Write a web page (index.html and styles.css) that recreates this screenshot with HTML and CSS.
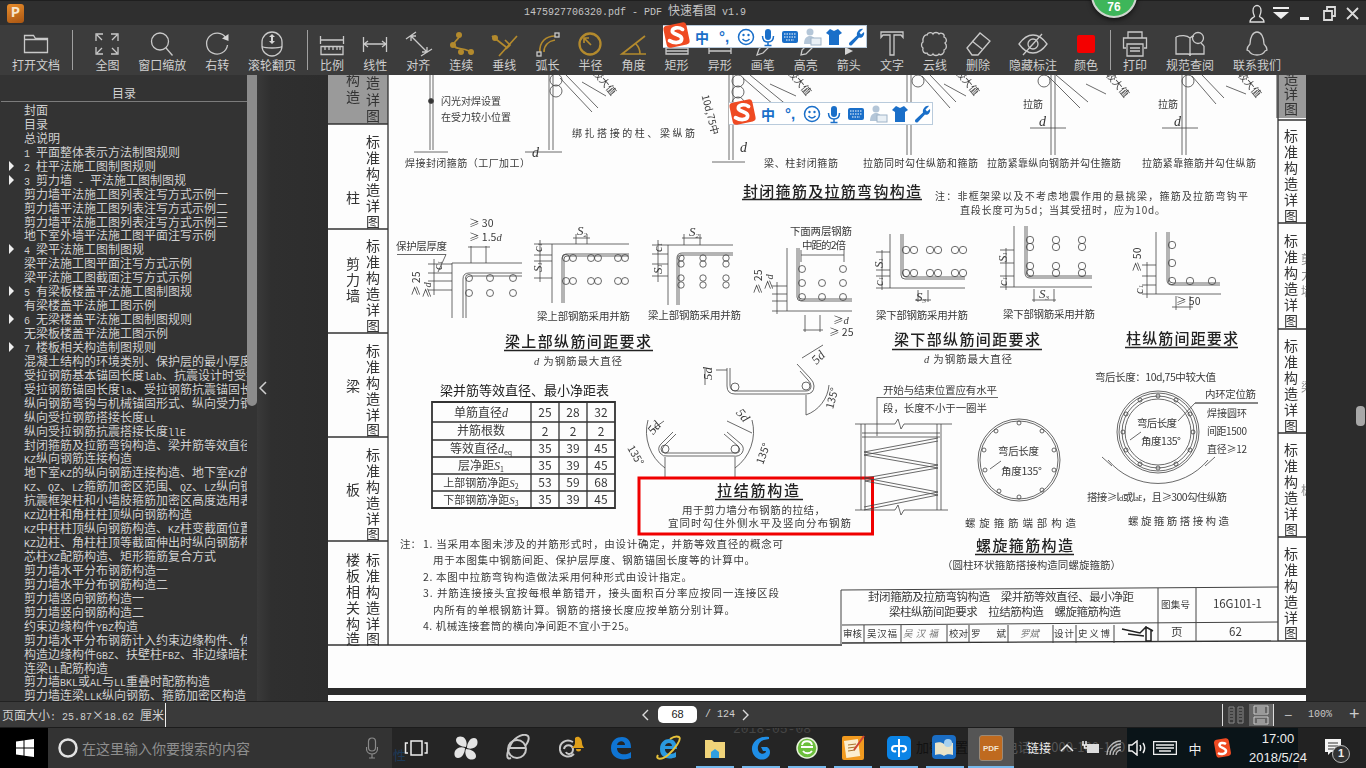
FILE: index.html
```html
<!DOCTYPE html>
<html lang="zh-CN">
<head>
<meta charset="utf-8">
<title>PDF 快速看图</title>
<link rel="stylesheet" href="styles.css">
</head>
<body>
<div class="app">
  <header class="titlebar">
    <div class="logo">P</div>
    <div class="wintitle"><span>1475927706320.pdf - PDF </span><b>快速看图</b><span> v1.9</span></div>
    <div class="winbtns">
      <svg width="20" height="20" viewBox="0 0 20 20" class="wb wu"><path d="M3 19c0-4 3-4 4.500-5.500 0-1-1.500-2.500-1.500-6 0-3 2-5 4-5s4 2 4 5c0 3.500-1.500 5-1.500 6C14 15 17 15 17 19z"/></svg>
      <svg width="24" height="20" viewBox="0 0 24 20" class="wf"><rect x="4" y="4" width="16" height="2"/><path d="M4 9h16l-8 7z"/></svg>
      <svg width="24" height="20" viewBox="0 0 24 20" class="wf"><rect x="7" y="14" width="9" height="3"/></svg>
      <svg width="24" height="20" viewBox="0 0 24 20" class="wb wb2"><path d="M7 8h8v9H7zM10 8V4h8v9h-3"/></svg>
      <svg width="24" height="20" viewBox="0 0 24 20" class="wb wb2"><path d="M6 5l11 11M17 5L6 16"/></svg>
    </div>
  </header>

  <nav class="toolbar">
    <div class="tool t72"><svg viewBox="0 0 36 24"><path class="g" d="M6.500 20.500v-17h9l2 3h12v14zM6.500 7.500h23"/></svg><span>打开文档</span></div>
    <i class="sep"></i>
    <div class="groupb">
      <div class="tool t55"><svg viewBox="0 0 36 24"><path class="g" d="M13 8L8 3M7 9V2h7M23 8l5-5M22 2h7v7M13 16l-5 5M7 15v7h7M23 16l5 5M29 15v7h-7"/></svg><span>全图</span></div>
      <div class="tool t55"><svg viewBox="0 0 36 24"><circle class="g" cx="16" cy="9.500" r="8.500"/><path class="g" d="M22 16l6.500 7.500"/></svg><span>窗口缩放</span></div>
      <div class="tool t55"><svg viewBox="0 0 36 24"><path class="g" d="M27 6A10.500 10.500 0 1 0 28.500 13"/><path class="fg" d="M23 6.500l6.500 2.500L29.500 2z"/></svg><span>右转</span></div>
      <div class="tool t55"><svg viewBox="0 0 36 24"><rect class="g" x="8" y="0" width="20" height="24" rx="10"/><path class="g" d="M8 14.500c4 2 16 2 20 0"/><path class="fg" d="M18 2l3 3h-2v4h2l-3 3-3-3h2V5h-2z"/></svg><span>滚轮翻页</span></div>
    </div>
    <i class="sep sep2"></i>
    <div class="groupc">
      <div class="tool t43"><svg viewBox="0 0 36 24"><path class="g" d="M6.500 4v8M29.500 4v8M7 8h22"/><path class="g" d="M7 14.500h22v8H7zM11 15v3M15 15v3M19 15v3M23 15v3M26 15v3"/></svg><span>比例</span></div>
      <div class="tool t43"><svg viewBox="0 0 36 24"><path class="g" d="M6.500 5v15M29.500 5v15M7 12h22M11 9l-4 3 4 3M25 9l4 3-4 3"/></svg><span>线性</span></div>
      <div class="tool t43"><svg viewBox="0 0 36 24"><path class="g" d="M6 7l10-7M21 24l11-7M11 4l16 16M11 9V4h5M22 20h5v-5"/></svg><span>对齐</span></div>
      <div class="tool t43"><svg viewBox="0 0 36 24"><path class="o" d="M16 2c3 4-6 7-5 11 1 5 7 2 15 6"/><circle class="of" cx="16" cy="3" r="3"/><circle class="of" cx="10" cy="13" r="3"/><circle class="of" cx="18" cy="20" r="3"/><circle class="of" cx="28" cy="20" r="3"/></svg><span>连续</span></div>
      <div class="tool t43"><svg viewBox="0 0 36 24"><path class="o" d="M13 24L31 4M6 4l14 11M19 8l5 5-4 4"/><circle class="of" cx="9" cy="6" r="3"/></svg><span>垂线</span></div>
      <div class="tool t43"><svg viewBox="0 0 36 24"><path class="o" d="M11 20C10 10 17 4 26 4M15 20c0-7 5-11 11-12"/><rect class="g" x="8" y="20" width="4" height="4"/><rect class="g" x="26" y="1" width="4" height="4"/></svg><span>弧长</span></div>
      <div class="tool t43"><svg viewBox="0 0 36 24"><circle class="o o2" cx="18" cy="12" r="10.500"/><path class="o" d="M19 13L12 6M12 11V6h5"/></svg><span>半径</span></div>
      <div class="tool t43"><svg viewBox="0 0 36 24"><path class="o" d="M29 4L6 22h24M20 12c3 3 4 6 4 10"/></svg><span>角度</span></div>
      <div class="tool t43"><svg viewBox="0 0 36 24"><path class="g" d="M7 16h22v6H7zM7 19h22"/></svg><span>矩形</span></div>
      <div class="tool t43"><svg viewBox="0 0 36 24"><path class="g" d="M7 16v6M29 16v6M7 19h22"/></svg><span>异形</span></div>
      <div class="tool t43"><svg viewBox="0 0 36 24"><path class="g" d="M12 23l2-6 8-8 4 4-8 8z"/></svg><span>画笔</span></div>
      <div class="tool t43"><svg viewBox="0 0 36 24"><path class="g" d="M13 23l1-5 8-8 4 4-8 8z"/></svg><span>高亮</span></div>
      <div class="tool t43"><svg viewBox="0 0 36 24"><path class="fg" d="M14 15l8 4-8 4z"/></svg><span>箭头</span></div>
      <div class="tool t43"><svg viewBox="0 0 36 24"><path class="g" d="M7 0h22v5.500l-2-2.500h-7v20h-4V3H9L7 5.500z"/></svg><span>文字</span></div>
      <div class="tool t43"><svg viewBox="0 0 36 24"><path class="g" d="M10 3c1-3 5-3 6-1 1-2 5-2 6 0 2-2 6 0 5 3 3 1 3 5 1 6 2 2 2 6-1 7 1 3-3 6-5 4-1 2-5 2-6 0-1 2-5 2-6-1-3 1-5-2-4-5-2-1-2-5 0-6-1-4 2-8 4-7z"/></svg><span>云线</span></div>
      <div class="tool t43"><svg viewBox="0 0 36 24"><path class="g" d="M7 16L20 1l10 8-12 14h-6zM12 9l10 8"/></svg><span>删除</span></div>
    </div>
    <div class="tool t56"><svg viewBox="0 0 36 24"><path class="g" d="M4 12c5-7 9-9 14-9s9 2 14 9c-5 7-9 9-14 9S9 19 4 12z"/><circle class="g" cx="18" cy="12" r="5"/><path class="g" d="M27 2L8 23"/></svg><span>隐藏标注</span></div>
    <div class="tool t43b"><svg viewBox="0 0 36 24"><rect class="red" x="9" y="3" width="18" height="18" rx="2"/></svg><span>颜色</span></div>
    <i class="sep sep3"></i>
    <div class="tool t43c"><svg viewBox="0 0 36 24"><path class="g" d="M11 6V0h14v6M9 16H6.500V6h23v10H27M10 12h16v12H10zM13 16h10M13 19h10"/></svg><span>打印</span></div>
    <div class="tool t60"><svg viewBox="0 0 36 24"><path class="g" d="M4 5v17h12c1 0 2 1 2 2 0-1 1-2 2-2h12V14M4 5c5-2 11-2 14 1v18M18 6c1-1 2-2 4-2"/><circle class="g" cx="26" cy="6" r="5.500"/><path class="g" d="M29 11l3 3"/></svg><span>规范查阅</span></div>
    <div class="tool t60b"><svg viewBox="0 0 36 24"><path class="g" d="M11 12c0-7 3-12 7-12s7 5 7 12c2 2 3 4 3 6l-2 1c-1 2-3 4-8 4s-7-2-8-4l-2-1c0-2 1-4 3-6z"/></svg><span>联系我们</span></div>
  </nav>

  <main class="main">
    <aside class="side">
      <div class="sidehead">目录</div>
      <ul class="toc">
        <li>封面</li>
        <li>目录</li>
        <li>总说明</li>
        <li><span class="l">1 </span>平面整体表示方法制图规则</li>
        <li class="arr"><span class="l">2 </span>柱平法施工图制图规则</li>
        <li class="arr"><span class="l">3 </span>剪力墙<span class="l"> - </span>平法施工图制图规</li>
        <li>剪力墙平法施工图列表注写方式示例一</li>
        <li>剪力墙平法施工图列表注写方式示例二</li>
        <li>剪力墙平法施工图列表注写方式示例三</li>
        <li>地下室外墙平法施工图平面注写示例</li>
        <li class="arr"><span class="l">4 </span>梁平法施工图制图规</li>
        <li>梁平法施工图平面注写方式示例</li>
        <li>梁平法施工图截面注写方式示例</li>
        <li class="arr"><span class="l">5 </span>有梁板楼盖平法施工图制图规</li>
        <li>有梁楼盖平法施工图示例</li>
        <li class="arr"><span class="l">6 </span>无梁楼盖平法施工图制图规则</li>
        <li>无梁板楼盖平法施工图示例</li>
        <li class="arr"><span class="l">7 </span>楼板相关构造制图规则</li>
        <li>混凝土结构的环境类别、保护层的最小厚度</li>
        <li>受拉钢筋基本锚固长度<span class="l">lab</span>、抗震设计时受拉钢筋基本锚固长度</li>
        <li class="cur"><span>受拉钢筋锚固长度<span class="l">la</span>、受拉钢筋抗震锚固长度</span></li>
        <li>纵向钢筋弯钩与机械锚固形式、纵向受力钢筋</li>
        <li>纵向受拉钢筋搭接长度<span class="l">LL</span></li>
        <li>纵向受拉钢筋抗震搭接长度<span class="l">llE</span></li>
        <li>封闭箍筋及拉筋弯钩构造、梁并筋等效直径</li>
        <li><span class="l">KZ</span>纵向钢筋连接构造</li>
        <li>地下室<span class="l">KZ</span>的纵向钢筋连接构造、地下室<span class="l">KZ</span>的</li>
        <li><span class="l">KZ</span>、<span class="l">QZ</span>、<span class="l">LZ</span>箍筋加密区范围、<span class="l">QZ</span>、<span class="l">LZ</span>纵向钢筋</li>
        <li>抗震框架柱和小墙肢箍筋加密区高度选用表</li>
        <li><span class="l">KZ</span>边柱和角柱柱顶纵向钢筋构造</li>
        <li><span class="l">KZ</span>中柱柱顶纵向钢筋构造、<span class="l">KZ</span>柱变截面位置</li>
        <li><span class="l">KZ</span>边柱、角柱柱顶等截面伸出时纵向钢筋构造</li>
        <li>芯柱<span class="l">XZ</span>配筋构造、矩形箍筋复合方式</li>
        <li>剪力墙水平分布钢筋构造一</li>
        <li>剪力墙水平分布钢筋构造二</li>
        <li>剪力墙竖向钢筋构造一</li>
        <li>剪力墙竖向钢筋构造二</li>
        <li>约束边缘构件<span class="l">YBZ</span>构造</li>
        <li>剪力墙水平分布钢筋计入约束边缘构件、体积</li>
        <li>构造边缘构件<span class="l">GBZ</span>、扶壁柱<span class="l">FBZ</span>、非边缘暗柱</li>
        <li>连梁<span class="l">LL</span>配筋构造</li>
        <li>剪力墙<span class="l">BKL</span>或<span class="l">AL</span>与<span class="l">LL</span>重叠时配筋构造</li>
        <li>剪力墙连梁<span class="l">LLK</span>纵向钢筋、箍筋加密区构造</li>
      </ul>
    </aside>
    <div class="sidebar-track"><div class="thumb"></div></div>
    <div class="gutter"><svg class="collapse" width="10" height="14" viewBox="0 0 10 14"><path d="M8 1L2 7l6 6"/></svg></div>

    <svg class="page" viewBox="328 75 978 626" width="978" height="626">
      <rect x="328" y="75" width="978" height="613" fill="#fdfdfd"/>
      <rect x="328" y="688" width="978" height="7" fill="#2b2b2b"/>
      <rect x="328" y="695" width="978" height="6" fill="#fdfdfd"/>

      <!-- side index tabs -->
      <rect x="328" y="75" width="60" height="49" fill="#9a9a9a"/>
      <rect x="1276" y="75" width="30" height="43" fill="#9a9a9a"/>
      <g class="ln2">
        <path d="M388 75V645M328 124H388M328 229H388M328 333H388M328 437H388M328 541H388M328 645H842"/>
        <path d="M1278 75V641M1278 120H1306M1278 223H1306M1278 329H1306M1278 433H1306M1278 537H1306M1278 641H1306M842 643L1278 641"/>
      </g>
      <g class="tab">
        <text x="346" y="85">构</text><text x="346" y="102">造</text>
        <text x="366" y="88">造</text><text x="366" y="105">详</text><text x="366" y="121">图</text>
        <text x="346" y="203">柱</text>
        <text x="346" y="269">剪</text><text x="346" y="285">力</text><text x="346" y="301">墙</text>
        <text x="346" y="391">梁</text>
        <text x="346" y="495">板</text>
        <text x="346" y="565">楼</text><text x="346" y="581">板</text><text x="346" y="597">相</text><text x="346" y="613">关</text><text x="346" y="629">构</text><text x="346" y="644">造</text>
        <text x="366" y="147">标</text><text x="366" y="163">准</text><text x="366" y="179">构</text><text x="366" y="195">造</text><text x="366" y="211">详</text><text x="366" y="227">图</text>
        <text x="366" y="251">标</text><text x="366" y="267">准</text><text x="366" y="283">构</text><text x="366" y="299">造</text><text x="366" y="315">详</text><text x="366" y="331">图</text>
        <text x="366" y="356">标</text><text x="366" y="372">准</text><text x="366" y="388">构</text><text x="366" y="404">造</text><text x="366" y="420">详</text><text x="366" y="435">图</text>
        <text x="366" y="460">标</text><text x="366" y="476">准</text><text x="366" y="492">构</text><text x="366" y="508">造</text><text x="366" y="524">详</text><text x="366" y="539">图</text>
        <text x="366" y="565">标</text><text x="366" y="581">准</text><text x="366" y="597">构</text><text x="366" y="613">造</text><text x="366" y="629">详</text><text x="366" y="644">图</text>
        <text x="1284" y="84">造</text><text x="1284" y="99">详</text><text x="1284" y="114">图</text>
        <text x="1284" y="141">标</text><text x="1284" y="157">准</text><text x="1284" y="173">构</text><text x="1284" y="189">造</text><text x="1284" y="205">详</text><text x="1284" y="221">图</text>
        <text x="1284" y="246">标</text><text x="1284" y="262">准</text><text x="1284" y="278">构</text><text x="1284" y="294">造</text><text x="1284" y="310">详</text><text x="1284" y="326">图</text>
        <text x="1284" y="351">标</text><text x="1284" y="367">准</text><text x="1284" y="383">构</text><text x="1284" y="399">造</text><text x="1284" y="415">详</text><text x="1284" y="431">图</text>
        <text x="1284" y="455">标</text><text x="1284" y="471">准</text><text x="1284" y="487">构</text><text x="1284" y="503">造</text><text x="1284" y="519">详</text><text x="1284" y="535">图</text>
        <text x="1284" y="559">标</text><text x="1284" y="575">准</text><text x="1284" y="591">构</text><text x="1284" y="607">造</text><text x="1284" y="623">详</text><text x="1284" y="638">图</text>
      </g>
      <g class="bleed"><text x="1301" y="264">剪</text><text x="1301" y="280">力</text><text x="1301" y="296">墙</text><text x="1301" y="392">梁</text><text x="1301" y="495">板</text></g>

      <!-- top hook row -->
      <g class="ln">
        <path d="M430 75V150M433 75V150M414 152H448"/><circle class="dot" cx="431" cy="101" r="2.500"/>
        <path d="M549 75V150M553 75V150M525 152H562"/>
        <circle cx="556" cy="80" r="6"/><circle cx="556" cy="91" r="6"/>
        <path d="M560 78L592 112M566 75L598 108M582 82L606 96"/>
        <path d="M729 75V160M733 75V160M712 162H745"/>
        <circle cx="738" cy="81" r="6"/><circle cx="738" cy="92" r="6"/><circle cx="738" cy="103" r="6"/>
        <path d="M743 78L782 112M750 75L788 106M770 84L796 96"/>
        <path d="M907 75V155M911 75V155M889 120H925"/>
        <circle cx="918" cy="81" r="6"/><path d="M922 76L950 108M930 75L956 102M944 84L966 96"/>
        <path d="M1051 75V155M1055 75V155M1030 128H1066"/>
        <circle cx="1044" cy="81" r="6"/><path d="M1048 76L1080 108M1056 75L1088 102M1086 84L1106 94"/>
        <path d="M1182 75V155M1186 75V155M1162 128H1198"/>
        <circle cx="1188" cy="81" r="6"/><path d="M1192 76L1216 104M1202 75L1224 98M1226 86L1246 94"/>
      </g>
      <g class="sm">
        <text x="441" y="105">闪光对焊设置</text><text x="441" y="121">在受力较小位置</text>
        <text x="405" y="167" textLength="125">焊接封闭箍筋（工厂加工）</text>
        <text x="572" y="137" textLength="123">绑扎搭接的柱、梁纵筋</text>
        <text x="764" y="167" textLength="74">梁、柱封闭箍筋</text>
        <text x="1023" y="108">拉筋</text><text x="1158" y="108">拉筋</text>
        <text x="863" y="167" textLength="115">拉筋同时勾住纵筋和箍筋</text>
        <text x="987" y="167" textLength="134">拉筋紧靠纵向钢筋并勾住箍筋</text>
        <text x="1142" y="167" textLength="114">拉筋紧靠箍筋并勾住纵筋</text>
        <text x="935" y="200" textLength="313">注：非框架梁以及不考虑地震作用的悬挑梁，箍筋及拉筋弯钩平</text>
        <text x="960" y="214" textLength="205">直段长度可为5d；当其受扭时，应为10d。</text>
        <text class="rot" transform="rotate(50 605 82)" x="590" y="86">较大值</text>
        <text class="rot" transform="rotate(50 800 82)" x="785" y="86">较大值</text>
        <text class="rot" transform="rotate(50 968 82)" x="953" y="86">较大值</text>
        <text class="rot" transform="rotate(50 1118 84)" x="1103" y="88">较大值</text>
        <text class="rot" transform="rotate(50 1250 84)" x="1235" y="88">较大值</text>
        <text transform="rotate(75 710 112)" x="692" y="116">10d,75中</text>
      </g>
      <g class="it"><text x="532" y="157">d</text><text x="740" y="152">d</text><text x="1039" y="126">d</text><text x="1174" y="126">d</text></g>

      <text class="hd" x="743" y="197" textLength="178">封闭箍筋及拉筋弯钩构造</text>
      <path class="ul" d="M742 199.500H922"/>

      <!-- mid diagrams -->
      <g class="ln">
        <path d="M452 263V318M452 263H522M463 318V279Q463 273 469 273H522M466 318V281Q466 276 471 276H522"/>
        <circle cx="469" cy="278" r="3.500"/><circle cx="490" cy="278" r="3.500"/><circle cx="513" cy="278" r="3.500"/>
        <circle cx="469" cy="293" r="3.500"/><circle cx="490" cy="293" r="3.500"/><circle cx="513" cy="293" r="3.500"/>
        <path d="M471 246V263M486 246V263M468 247H490M397 254.500H446L438 272M428 264H452M428 273H452M428 281H452M428 290H452M434 259V295"/>
        <path d="M552 244V303M552 244H629M562 303V258Q562 254 566 254H629M564 303V259Q564 256 567 256H629"/>
        <circle cx="566" cy="258" r="3.500"/><circle cx="573" cy="258" r="3.500"/><circle cx="591" cy="258" r="3.500"/><circle cx="598" cy="258" r="3.500"/><circle cx="618" cy="258" r="3.500"/><circle cx="625" cy="258" r="3.500"/>
        <circle cx="566" cy="281" r="3.500"/><circle cx="573" cy="281" r="3.500"/><circle cx="591" cy="281" r="3.500"/><circle cx="598" cy="281" r="3.500"/><circle cx="618" cy="281" r="3.500"/><circle cx="625" cy="281" r="3.500"/>
        <path d="M576 234V244M587 234V244M573 238H590M534 244H552M534 255H552M534 261H552M534 278H552M540 240V282"/>
        <path d="M668 245V305M668 245H733M677 305V258Q677 253 682 253H733M679 305V259Q679 255 683 255H733"/>
        <circle cx="681" cy="258" r="3.200"/><circle cx="681" cy="264" r="3.200"/><circle cx="703" cy="258" r="3.200"/><circle cx="703" cy="264" r="3.200"/><circle cx="726" cy="258" r="3.200"/><circle cx="726" cy="264" r="3.200"/>
        <circle cx="681" cy="278" r="3.200"/><circle cx="681" cy="285" r="3.200"/><circle cx="703" cy="278" r="3.200"/><circle cx="703" cy="285" r="3.200"/><circle cx="726" cy="278" r="3.200"/><circle cx="726" cy="285" r="3.200"/>
        <path d="M684 234V245M700 234V245M682 238H702M652 245H668M652 254H668M652 264H668M652 276H668M658 240V282"/>
        <path d="M787 248V311M787 311H852M797 248V297Q797 301 801 301H852M799 248V296Q799 299 802 299H852"/>
        <circle cx="802" cy="269" r="3.500"/><circle cx="802" cy="283" r="3.500"/><circle cx="802" cy="297" r="3.500"/><circle cx="822" cy="283" r="3.500"/><circle cx="822" cy="297" r="3.500"/><circle cx="843" cy="269" r="3.500"/><circle cx="843" cy="283" r="3.500"/><circle cx="843" cy="297" r="3.500"/>
        <path d="M801 255H844M801 250V262M844 250V262M805 315V332M820 315V332M803 330H823M772 286H787M772 294H787M772 301H787M772 311H787M777 282V314"/>
        <path d="M890 234V288M890 288H965M901 234V275Q901 279 905 279H965M903 234V273Q903 277 906 277H965"/>
        <circle cx="906" cy="250" r="3.700"/><circle cx="914" cy="250" r="3.700"/><circle cx="930" cy="250" r="3.700"/><circle cx="938" cy="250" r="3.700"/><circle cx="955" cy="250" r="3.700"/><circle cx="963" cy="250" r="3.700"/>
        <circle cx="906" cy="273" r="3.700"/><circle cx="914" cy="273" r="3.700"/><circle cx="930" cy="273" r="3.700"/><circle cx="938" cy="273" r="3.700"/><circle cx="955" cy="273" r="3.700"/><circle cx="963" cy="273" r="3.700"/>
        <path d="M918 290V302M928 290V302M915 300H931M876 252H890M876 270H890M876 276H890M876 288H890M882 250V290"/>
        <path d="M1014 226V287M1014 287H1092M1025 226V273Q1025 278 1030 278H1092M1027 226V272Q1027 276 1031 276H1092"/>
        <circle cx="1030" cy="240" r="3.700"/><circle cx="1030" cy="247" r="3.700"/><circle cx="1056" cy="240" r="3.700"/><circle cx="1056" cy="247" r="3.700"/><circle cx="1082" cy="240" r="3.700"/><circle cx="1082" cy="247" r="3.700"/>
        <circle cx="1030" cy="266" r="3.700"/><circle cx="1030" cy="273" r="3.700"/><circle cx="1056" cy="266" r="3.700"/><circle cx="1056" cy="273" r="3.700"/><circle cx="1082" cy="266" r="3.700"/><circle cx="1082" cy="273" r="3.700"/>
        <path d="M1034 289V302M1054 289V302M1032 300H1056M1000 250H1014M1000 263H1014M1000 276H1014M1000 287H1014M1006 248V290"/>
        <path d="M1156 232V294M1156 294H1221M1167 232V280Q1167 285 1172 285H1220M1169 232V279Q1169 283 1173 283H1220"/>
        <circle cx="1172" cy="245" r="3.700"/><circle cx="1172" cy="263" r="3.700"/><circle cx="1172" cy="281" r="3.700"/><circle cx="1190" cy="281" r="3.700"/><circle cx="1212" cy="281" r="3.700"/>
        <path d="M1176 296V310M1190 296V310M1172 307H1193M1142 265H1156M1142 276H1156M1142 285H1156M1142 294H1156M1147 262V298"/>
      </g>
      <g class="sm2">
        <text x="469" y="227">≥ 30</text><text x="469" y="241">≥ 1.5<tspan class="ital">d</tspan></text>
        <text x="396" y="250" textLength="51">保护层厚度</text>
        <text x="790" y="235" textLength="62">下面两层钢筋</text><text x="802" y="249" textLength="44">中距的2倍</text>
        <text x="537" y="320" textLength="93">梁上部钢筋采用并筋</text>
        <text x="648" y="319" textLength="93">梁上部钢筋采用并筋</text>
        <text x="876" y="319" textLength="92">梁下部钢筋采用并筋</text>
        <text x="1003" y="318" textLength="92">梁下部钢筋采用并筋</text>
        <text x="833" y="324">≥<tspan class="ital">d</tspan></text><text x="829" y="336">≥ 25</text>
        <text x="1176" y="305">≥ 50</text>
        <text class="it2" x="577" y="235">S<tspan class="sub" dy="2">2</tspan></text>
        <text class="it2" x="689" y="236">S<tspan class="sub" dy="2">2</tspan></text>
        <text class="it2" x="916" y="301">S<tspan class="sub" dy="2">3</tspan></text>
        <text class="it2" x="1039" y="298">S<tspan class="sub" dy="2">3</tspan></text>
        <text transform="rotate(-90 420 296)" x="420" y="296">≥ 25</text>
        <text transform="rotate(-90 431 298)" x="431" y="298">≥<tspan class="ital">d</tspan></text>
        <text transform="rotate(-90 762 294)" x="762" y="294">≥ 25</text>
        <text transform="rotate(-90 773 290)" x="773" y="290">≥<tspan class="ital">d</tspan></text>
        <text transform="rotate(-90 1141 272)" x="1141" y="272">≥ 50</text>
        <text class="it2" transform="rotate(-90 442 270)" x="442" y="270">c<tspan class="sub">1</tspan></text>
        <text class="it2" transform="rotate(-90 542 272)" x="542" y="272">S<tspan class="sub">1</tspan></text>
        <text class="it2" transform="rotate(-90 542 252)" x="542" y="252">c<tspan class="sub">1</tspan></text>
        <text class="it2" transform="rotate(-90 662 274)" x="662" y="274">S<tspan class="sub">1</tspan></text>
        <text class="it2" transform="rotate(-90 662 252)" x="662" y="252">c<tspan class="sub">1</tspan></text>
        <text class="it2" transform="rotate(-90 883 268)" x="883" y="268">S<tspan class="sub">1</tspan></text>
        <text class="it2" transform="rotate(-90 883 286)" x="883" y="286">c<tspan class="sub">1</tspan></text>
        <text class="it2" transform="rotate(-90 1007 262)" x="1007" y="262">S<tspan class="sub">1</tspan></text>
        <text class="it2" transform="rotate(-90 1007 286)" x="1007" y="286">c<tspan class="sub">1</tspan></text>
        <text class="it2" transform="rotate(-90 1143 294)" x="1143" y="294">c<tspan class="sub">1</tspan></text>
      </g>

      <text class="hd" x="505" y="347" textLength="146">梁上部纵筋间距要求</text><path class="ul" d="M504 350.500H653"/>
      <text class="hd" x="894" y="345" textLength="146">梁下部纵筋间距要求</text><path class="ul" d="M892 349.500H1042"/>
      <text class="hd" x="1126" y="344" textLength="112">柱纵筋间距要求</text><path class="ul" d="M1125 347.500H1238"/>
      <g class="sm2">
        <text x="534" y="365" textLength="88"><tspan class="ital">d</tspan> 为钢筋最大直径</text>
        <text x="924" y="363" textLength="88"><tspan class="ital">d</tspan> 为钢筋最大直径</text>
      </g>

      <!-- table -->
      <text class="tt" x="440" y="395" textLength="169">梁并筋等效直径、最小净距表</text>
      <g class="ln2"><path class="th" d="M432 402H615V508H432z"/><path d="M531 402V508M559 402V508M587 402V508M432 422H615M432 440H615M432 457H615M432 474H615M432 491H615"/></g>
      <g class="cell">
        <text x="481" y="417">单筋直径<tspan class="ital">d</tspan></text><text x="481" y="435">并筋根数</text><text x="481" y="453">等效直径<tspan class="ital">d</tspan><tspan class="sub" dy="2">eq</tspan></text><text x="481" y="470">层净距<tspan class="ital">S</tspan><tspan class="sub" dy="2">1</tspan></text><text x="481" y="487" class="c11">上部钢筋净距<tspan class="ital">S</tspan><tspan class="sub" dy="2">2</tspan></text><text x="481" y="504" class="c11">下部钢筋净距<tspan class="ital">S</tspan><tspan class="sub" dy="2">3</tspan></text>
        <text x="545" y="417">25</text><text x="573" y="417">28</text><text x="601" y="417">32</text>
        <text x="545" y="436">2</text><text x="573" y="436">2</text><text x="601" y="436">2</text>
        <text x="545" y="453">35</text><text x="573" y="453">39</text><text x="601" y="453">45</text>
        <text x="545" y="470">35</text><text x="573" y="470">39</text><text x="601" y="470">45</text>
        <text x="545" y="487">53</text><text x="573" y="487">59</text><text x="601" y="487">68</text>
        <text x="545" y="504">35</text><text x="573" y="504">39</text><text x="601" y="504">45</text>
      </g>

      <!-- tie bars -->
      <g class="ln">
        <path d="M727 368V386Q727 394 735 394H806Q814 394 814 386 814 382 810 378L797 364M730 368V385Q730 391 736 391H806Q811 391 811 386 811 383 808 380L800 371M716 370H727M705 368V385"/>
        <circle cx="735" cy="387" r="4"/><circle cx="806" cy="386" r="4"/>
        <path d="M806 395V415M806 415A35 35 0 0 0 829 385M802 358L823 345"/>
        <path d="M673 432L661 444Q657 448 660 453 663 457 668 456H733Q739 457 742 453 745 448 741 444L727 432M676 434L664 446Q661 449 663 452 665 454 668 453H733Q737 454 739 452 741 449 738 446L724 434"/>
        <circle cx="665" cy="449" r="4"/><circle cx="735" cy="449" r="4"/>
        <path d="M665 457V477M735 457V477M665 468A45 45 0 0 1 648 420M735 468A45 45 0 0 0 752 420M650 431L664 421M727 421L752 433"/>
      </g>
      <g class="sm2">
        <text class="it2" transform="rotate(-90 712 380)" x="712" y="380">5d</text>
        <text class="it2" transform="rotate(-50 658 425)" x="647" y="428">5d</text>
        <text class="it2" transform="rotate(50 745 418)" x="735" y="422">5d</text>
        <text class="it2" transform="rotate(-45 818 358)" x="812" y="362">5d</text>
        <text transform="rotate(-75 832 402)" x="825" y="405">135°</text>
        <text transform="rotate(60 634 452)" x="627" y="456">135°</text>
        <text transform="rotate(-70 762 456)" x="754" y="460">135°</text>
      </g>
      <text class="hd" x="717" y="496" textLength="82">拉结筋构造</text><path class="ul" d="M715 499.500H803"/>
      <g class="sm2"><text x="682" y="514" textLength="143">用于剪力墙分布钢筋的拉结，</text><text x="668" y="527" textLength="183">宜同时勾住外侧水平及竖向分布钢筋</text></g>
      <rect class="redbox" x="639" y="478" width="233.500" height="56"/>

      <!-- spiral -->
      <g class="ln">
        <path d="M877 397.500H998M877 397V436M855 424H895L898 419 901 429 904 424H952M855 510H895L898 505 901 515 904 510H948"/>
        <path d="M861 424V510M865 424V510M937 424V510M941 424V510"/>
        <path d="M862 433H940M862 437H940M864 452L938 438M864 455L938 441M864 452L938 465M864 455L938 468M938 465L865 478M938 468L865 481M865 478L938 492M865 481L938 495M938 492L864 507M938 495L864 510"/>
        <circle cx="1019" cy="460" r="41"/><circle cx="1019" cy="460" r="39"/>
        <circle cx="1158" cy="432" r="41"/><circle cx="1158" cy="432" r="39"/><circle cx="1158" cy="432" r="36"/><circle cx="1158" cy="432" r="33"/>
        <circle cx="1158" cy="396" r="2"/><circle cx="1176" cy="400" r="2"/><circle cx="1190" cy="414" r="2"/><circle cx="1193" cy="432" r="2"/><circle cx="1190" cy="450" r="2"/><circle cx="1176" cy="464" r="2"/><circle cx="1158" cy="468" r="2"/><circle cx="1140" cy="464" r="2"/><circle cx="1126" cy="450" r="2"/><circle cx="1123" cy="432" r="2"/><circle cx="1126" cy="414" r="2"/><circle cx="1140" cy="400" r="2"/>
        <circle cx="1019" cy="423" r="2"/><circle cx="1042" cy="431" r="2"/><circle cx="1054" cy="450" r="2"/><circle cx="1054" cy="470" r="2"/><circle cx="1042" cy="490" r="2"/><circle cx="1019" cy="497" r="2"/><circle cx="999" cy="491" r="2"/><circle cx="985" cy="470" r="2"/><circle cx="984" cy="450" r="2"/><circle cx="996" cy="431" r="2"/>
        <path d="M1195 403H1258L1195 403L1178 421M1108 460A65 65 0 0 0 1208 460M1102 457L1112 466M1215 457L1205 466M990 469L1001 461M1130 440L1141 432"/>
      </g>
      <g class="sm2">
        <text x="883" y="394" textLength="114">开始与结束位置应有水平</text>
        <text x="883" y="412" textLength="104">段，长度不小于一圈半</text>
        <text x="998" y="455" textLength="41">弯后长度</text><text x="1001" y="475" textLength="41">角度135°</text>
        <text x="1137" y="427" textLength="40">弯后长度</text><text x="1141" y="445" textLength="40">角度135°</text>
        <text x="1095" y="381" textLength="121">弯后长度：10d,75中较大值</text>
        <text x="1205" y="398" textLength="51">内环定位筋</text>
        <text class="s10" x="1207" y="417" textLength="40">焊接圆环</text><text class="s10" x="1207" y="435" textLength="40">间距1500</text><text class="s10" x="1207" y="453" textLength="40">直径≥12</text>
        <text x="1087" y="501" textLength="140">搭接≥l<tspan class="sub">d</tspan>或l<tspan class="sub">aE</tspan>，且≥300勾住纵筋</text>
        <text x="965" y="527" textLength="111">螺旋箍筋端部构造</text>
        <text x="1128" y="525" textLength="101">螺旋箍筋搭接构造</text>
        <text x="942" y="569" textLength="179">（圆柱环状箍筋搭接构造同螺旋箍筋）</text>
      </g>
      <text class="hd" x="976" y="551" textLength="97">螺旋箍筋构造</text><path class="ul" d="M975 554.500H1074"/>

      <!-- notes -->
      <g class="note">
        <text x="400" y="548">注：</text>
        <text x="423" y="548" textLength="360">1. 当采用本图未涉及的并筋形式时，由设计确定，并筋等效直径的概念可</text>
        <text x="433" y="564" textLength="322">用于本图集中钢筋间距、保护层厚度、钢筋锚固长度等的计算中。</text>
        <text x="423" y="581" textLength="269">2. 本图中拉筋弯钩构造做法采用何种形式由设计指定。</text>
        <text x="423" y="597" textLength="356">3. 并筋连接接头宜按每根单筋错开，接头面积百分率应按同一连接区段</text>
        <text x="433" y="614" textLength="302">内所有的单根钢筋计算。钢筋的搭接长度应按单筋分别计算。</text>
        <text x="423" y="630" textLength="212">4. 机械连接套筒的横向净间距不宜小于25。</text>
      </g>

      <!-- title block -->
      <g class="ln2 thin">
        <path d="M841 590L1278 587M841 590V644M842 625L1278 622M1158 588V642M1196 588V642M864 625V643M901 625V643M947 625V643M969 625V643M1008 625V643M1053 625V643M1076 625V643M1114 625V643"/>
      </g>
      <g class="sm3">
        <text x="868" y="601" textLength="266">封闭箍筋及拉筋弯钩构造　梁并筋等效直径、最小净距</text>
        <text x="889" y="616" textLength="232">梁柱纵筋间距要求　拉结筋构造　螺旋箍筋构造</text>
        <text class="s9" x="1161" y="608" textLength="29">图集号</text><text x="1213" y="608" textLength="49">16G101-1</text>
        <text x="1171" y="636">页</text><text x="1229" y="636">62</text>
        <text class="s9" x="843" y="637" textLength="19">审核</text><text class="s9" x="867" y="637" textLength="30">吴汉福</text>
        <text class="sig s9" x="903" y="637" textLength="35">吴汉福</text>
        <text class="s9" x="949" y="637" textLength="19">校对</text><text class="s9" x="971" y="637" textLength="35">罗　斌</text>
        <text class="sig s9" x="1020" y="637">罗斌</text>
        <text class="s9" x="1054" y="637" textLength="20">设计</text><text class="s9" x="1078" y="637" textLength="32">史义博</text>
      </g>
      <path class="sigp" d="M1122 629L1140 633 1146 627 1153 631M1128 634L1144 636M1146 626V641H1151V629"/>
    </svg>

    <div class="rightcol"><div class="rthumb"></div></div>
  </main>

  <footer class="status">
    <div class="pagesize">页面大小<span class="l">: 25.87</span>×<span class="l">18.62 </span>厘米</div>
    <div class="pager">
      <svg width="12" height="14" viewBox="0 0 12 14"><path d="M8 2L3 7l5 5"/></svg>
      <div class="pageinput">68</div>
      <span class="pageof">/ 124</span>
      <svg width="12" height="14" viewBox="0 0 12 14"><path d="M4 2l5 5-5 5"/></svg>
    </div>
    <div class="viewbtns">
      <i class="vsep"></i>
      <div class="vb"><svg width="16" height="18" viewBox="0 0 16 18"><path d="M1 1h5v16H1zM10 1h5v16h-5zM2 4h3M2 7h3M2 10h3M2 13h3M11 4h3M11 7h3M11 10h3M11 13h3"/></svg></div>
      <div class="vb on"><svg width="20" height="20" viewBox="0 0 20 20"><path d="M3 1h14v8H3zM3 12h14v7H3zM6 3h8M6 5h8M6 7h8M6 15h8M6 17h8"/></svg></div>
      <i class="vsep"></i>
      <span class="zm">−</span><span class="pct">100%</span><span class="zp">+</span>
    </div>
  </footer>

  <div class="taskbar">
    <span class="ghost g1">性</span><span class="ghost g2">2018-05-08</span><span class="ghost g3">加密设置</span><span class="ghost g4">电话：4000-100-100</span>
    <div class="start"><svg width="18" height="18" viewBox="0 0 18 18"><path d="M0 2.500L7.500 1.500V8.500H0zM8.500 1.300L18 0V8.500H8.500zM0 9.500H7.500V16.500L0 15.500zM8.500 9.500H18V18L8.500 16.700z"/></svg></div>
    <div class="search"><svg width="22" height="22" viewBox="0 0 22 22"><circle cx="11" cy="11" r="8.500"/></svg><span>在这里输入你要搜索的内容</span>
      <svg class="mic" width="12" height="22" viewBox="0 0 12 22"><rect x="2.500" y="1" width="7" height="13" rx="3.500"/><path d="M0.500 10v2c0 3 2.500 5 5.500 5s5.500-2 5.500-5v-2M6 17v4M3 21h6"/></svg></div>
    <div class="ti w48"><svg width="24" height="20" viewBox="0 0 24 20"><path class="wt" d="M7 3h11v14H7zM4 5H1.500v10H4M20.500 5H23v10h-2.500"/></svg></div>
    <div class="ti w52"><svg width="26" height="26" viewBox="0 0 26 26"><path class="ff" d="M13 12C8 12 3 9 3 5s5-4 7-3 5 5 3 10zM14 13c0-5 3-10 7-10s4 5 3 7-5 5-10 3zM13 14c5 0 10 3 10 7s-5 4-7 3-5-5-3-10zM12 13c0 5-3 10-7 10s-4-5-3-7 5-5 10-3z"/></svg></div>
    <div class="ti w52"><svg width="26" height="28" viewBox="0 0 26 28"><circle class="gr" cx="12" cy="15" r="9"/><path class="gr" d="M3 14h18"/><path class="gr" d="M6 24C1 26 1 20 6 10c5-8 13-11 17-8 2 3-1 8-3 10"/></svg></div>
    <div class="ti w52"><svg width="30" height="26" viewBox="0 0 30 26"><path class="gr" d="M18 7C11 3 4 8 5 15c1 6 9 9 14 4M9 14c1-5 8-5 9 0 0 6-6 6-7 3"/><path class="bell" d="M20 3c3-3 7 0 7 5 0 3 2 4 2 5H17c0-1 3-2 3-5zM21 14a2.500 2.500 0 0 0 5 0z"/></svg></div>
    <div class="ti w48"><svg width="24" height="26" viewBox="0 0 24 26"><path class="edge" d="M3 13C3 5 9 2 14 2c6 0 9 4 9 11H9c0 7 9 8 14 4v6c-7 3-20 2-20-10zM9 10h8c0-5-7-5-8 0z"/></svg></div>
    <div class="ti w48"><svg width="28" height="28" viewBox="0 0 28 28"><path class="ie" d="M6 15C6 8 11 5 15 5c5 0 8 4 8 10H11c0 6 7 6 11 3v5c-6 3-16 2-16-8zM11 12h7c0-4-6-4-7 0z"/><path class="ring" d="M4 21C1 26 8 26 14 21 21 15 28 5 25 3c-2-1-6 0-9 2"/></svg></div>
    <div class="ti w46 run"><svg width="24" height="24" viewBox="0 0 24 24"><path class="fy" d="M2 4h7l2 2h11v16H2z"/><path class="fb" d="M8 22v-6l4-3 4 3v6z"/></svg></div>
    <div class="ti w46 run"><svg width="24" height="28" viewBox="0 0 24 28"><path class="gb" d="M20 3C11 1 2 8 3 16c1 8 9 12 15 8 4-3 4-9 0-11h-6l2 4h3c0 3-5 4-7 1-3-4 0-11 5-12l5-1z"/></svg></div>
    <div class="ti w46 run"><svg width="24" height="28" viewBox="0 0 24 28"><circle class="ge" cx="12" cy="14" r="10"/><path class="gl" d="M6 13h12M17 17c-2 3-7 3-9 0M7 11c1-5 9-5 10 0"/></svg></div>
    <div class="ti w46 run"><svg width="26" height="28" viewBox="0 0 26 28"><rect class="nt" x="2" y="2" width="22" height="24" rx="2"/><rect class="nw" x="5" y="6" width="14" height="17" transform="rotate(-8 12 14)"/><path class="nl" d="M8 11l8-1M8 14l8-1M8 17l7-1"/><path class="pn" d="M24 2L14 16"/></svg></div>
    <div class="ti w46 run"><svg width="24" height="26" viewBox="0 0 24 26"><rect class="bb" x="0" y="1" width="24" height="24" rx="5"/><path class="bw" d="M12 4v18M5 14a3 3 0 0 1 3-3h3M19 14a3 3 0 0 0-3-3h-3M5 14c0 2 2 3 4 2M19 14c0 2-2 3-4 2"/></svg></div>
    <div class="ti w46 run"><svg width="26" height="26" viewBox="0 0 26 26"><rect class="bk" x="0" y="0" width="24" height="24" rx="4"/><path class="bp" d="M3 8c3-1 7-1 9 1v12c-2-2-6-2-9-1zM12 9c2-2 6-2 9-1v12c-3-1-7-1-9 1z"/><circle class="bm" cx="16" cy="8" r="4"/></svg></div>
    <div class="ti w46 run active"><div class="pdf"><span>PDF</span></div></div>
    <div class="tray">
      <div class="lnk">链接</div>
      <div class="tr w24"><svg width="14" height="10" viewBox="0 0 14 10"><path class="wt" d="M1 8l6-6 6 6"/></svg></div>
      <div class="tr w24"><svg width="18" height="14" viewBox="0 0 18 14"><path class="wt" d="M1 0v4M4 0v4M0 4h5M2.500 4v3h3"/><rect class="wf2" x="5" y="3" width="12" height="9"/></svg></div>
      <div class="tr w24"><svg width="18" height="16" viewBox="0 0 18 16"><path class="gr2" d="M1 15A14 14 0 0 1 15 1M4 15A11 11 0 0 1 15 4M7 15a8 8 0 0 1 8-8M10 15a5 5 0 0 1 5-5"/></svg></div>
      <div class="darktray">
        <div class="tr w20"><svg width="18" height="16" viewBox="0 0 18 16"><path class="wt" d="M1 5h3l5-4v14l-5-4H1zM12 5c1 2 1 4 0 6M15 3c2 3 2 7 0 10"/></svg></div>
        <div class="tr w36"><svg width="24" height="14" viewBox="0 0 24 14"><path class="wt" d="M.5.500h23v13H.5zM3 4h18M3 7h18M6 10h12"/></svg></div>
        <div class="tr w24 zh">中</div>
        <div class="tr w32"><svg width="18" height="22" viewBox="0 0 18 22"><rect class="sgbg" x="1" y="2" width="15" height="18" rx="3" transform="rotate(-10 8 11)"/><path class="sgs" d="M12 7C9 5 5 6 5.500 8.500S12 11 12 14s-5 4-8 2"/></svg></div>
        <div class="clock"><div>17:00</div><div>2018/5/24</div></div>
        <div class="notify"><svg width="18" height="18" viewBox="0 0 18 18"><path class="nf" d="M1 1h16v13H7l-3 3v-3H1z"/><path class="nl2" d="M4 5h10M4 8h10M4 11h6"/></svg><span class="badge">1</span></div>
      </div>
    </div>
  </div>

  <div class="ime ime1">
    <svg class="ims" width="30" height="30" viewBox="0 0 30 30"><rect x="2" y="3" width="25" height="24" rx="4" transform="rotate(-12 15 15)"/><path d="M21 9c-4-3-11-2-11 2s10 3 10 8-8 5-13 2"/></svg>
    <span class="zhong">中</span>
    <span class="punc">°,</span>
    <svg class="ic" width="22" height="22" viewBox="0 0 22 22"><circle class="st" cx="11" cy="11" r="7.500"/><path class="st" d="M7.500 13c2 2.500 5 2.500 7 0"/><circle class="fl" cx="8.500" cy="9" r="1.200"/><circle class="fl" cx="13.500" cy="9" r="1.200"/></svg>
    <svg class="ic" width="22" height="22" viewBox="0 0 22 22"><rect class="fl" x="8" y="3" width="6" height="11" rx="3"/><path class="st" d="M5.500 10c0 4 2.500 6 5.500 6s5.500-2 5.500-6M11 16v3M7.500 19.500h7"/></svg>
    <svg class="ic" width="22" height="22" viewBox="0 0 22 22"><rect class="fl" x="3" y="5" width="16" height="12" rx="2"/><path class="wd" d="M5 8h12M5 11h12M7 14h8"/></svg>
    <svg class="ic" width="22" height="22" viewBox="0 0 22 22"><circle class="pa" cx="9" cy="6" r="3.500"/><path class="pa" d="M3 18c0-6 3-8 6-8s6 2 6 8z"/><rect class="pc" x="10" y="12" width="10" height="7"/></svg>
    <svg class="ic" width="22" height="22" viewBox="0 0 22 22"><path class="fl" d="M7 3l4 2 4-2 4 4-3 2v10H6V9L3 7z"/></svg>
    <svg class="ic" width="22" height="22" viewBox="0 0 22 22"><path class="fl" d="M18 3l-3.500 3.500 1.500 2 3-2.500c1 3-2 7-5 5.500L7 19c-2 1.500-4-.5-2.500-2.500l7.500-7C11 6 15 2 18 3z"/></svg>
  </div>
  <div class="ime ime2">
    <svg class="ims" width="30" height="30" viewBox="0 0 30 30"><rect x="2" y="3" width="25" height="24" rx="4" transform="rotate(-12 15 15)"/><path d="M21 9c-4-3-11-2-11 2s10 3 10 8-8 5-13 2"/></svg>
    <span class="zhong">中</span>
    <span class="punc">°,</span>
    <svg class="ic" width="22" height="22" viewBox="0 0 22 22"><circle class="st" cx="11" cy="11" r="7.500"/><path class="st" d="M7.500 13c2 2.500 5 2.500 7 0"/><circle class="fl" cx="8.500" cy="9" r="1.200"/><circle class="fl" cx="13.500" cy="9" r="1.200"/></svg>
    <svg class="ic" width="22" height="22" viewBox="0 0 22 22"><rect class="fl" x="8" y="3" width="6" height="11" rx="3"/><path class="st" d="M5.500 10c0 4 2.500 6 5.500 6s5.500-2 5.500-6M11 16v3M7.500 19.500h7"/></svg>
    <svg class="ic" width="22" height="22" viewBox="0 0 22 22"><rect class="fl" x="3" y="5" width="16" height="12" rx="2"/><path class="wd" d="M5 8h12M5 11h12M7 14h8"/></svg>
    <svg class="ic" width="22" height="22" viewBox="0 0 22 22"><circle class="pa" cx="9" cy="6" r="3.500"/><path class="pa" d="M3 18c0-6 3-8 6-8s6 2 6 8z"/><rect class="pc" x="10" y="12" width="10" height="7"/></svg>
    <svg class="ic" width="22" height="22" viewBox="0 0 22 22"><path class="fl" d="M7 3l4 2 4-2 4 4-3 2v10H6V9L3 7z"/></svg>
    <svg class="ic" width="22" height="22" viewBox="0 0 22 22"><path class="fl" d="M18 3l-3.500 3.500 1.500 2 3-2.500c1 3-2 7-5 5.500L7 19c-2 1.500-4-.5-2.500-2.500l7.500-7C11 6 15 2 18 3z"/></svg>
  </div>

  <div class="scorebadge"><span>76</span></div>
</div>
</body>
</html>
```

FILE: styles.css
```css
* { box-sizing: border-box; }
html, body { margin: 0; padding: 0; height: 100%; overflow: hidden; background: #2b2b2b; }
body { font-family: "Noto Sans CJK SC", "Liberation Sans", sans-serif; font-size: 12px; color: #d2d2d2; }
.app { position: relative; width: 1366px; height: 768px; display: flex; flex-direction: column; overflow: hidden; }
.l { font-family: "Liberation Mono", monospace; font-size: 10px; }

/* title bar */
.titlebar { height: 25px; flex: none; background: #2f2f2f; border-top: 1px solid #1f1f1f; display: flex; align-items: center; position: relative; }
.logo { width: 17px; height: 19px; margin-left: 7px; border-radius: 3px; background: linear-gradient(160deg, #e88d2c, #a95512); color: #f6e4cc; font: 700 15px/19px "Liberation Mono", monospace; text-align: center; }
.wintitle { margin-left: 500px; width: 222px; white-space: nowrap; color: #c4c4c4; font-family: "Liberation Mono", monospace; font-size: 10px; line-height: 24px; }
.wintitle b { font: 400 12px "Noto Sans CJK SC", sans-serif; }
.winbtns { margin-left: auto; margin-right: 1px; display: flex; align-items: center; }
.wb { fill: none; stroke: #dcdcdc; stroke-width: 1.300; }
.wu { margin-right: 2px; }
.wb2 { stroke-width: 1.800; }
.wf { fill: #eee; }

/* toolbar */
.toolbar { height: 50px; flex: none; background: #3c3c3c; display: flex; align-items: flex-start; }
.tool { flex: none; height: 50px; padding-top: 7px; display: flex; flex-direction: column; align-items: center; color: #cfcfcf; white-space: nowrap; }
.tool svg { width: 36px; height: 24px; flex: none; overflow: visible; }
.tool span { line-height: 17px; font-size: 12px; }
.t72 { width: 72px; }
.t55 { width: 54.900px; }
.t43 { width: 43.070px; }
.t56 { width: 56px; margin-left: 5.400px; }
.t43b { width: 43px; margin-left: 3.500px; }
.t43c { width: 43px; margin-left: 2.500px; }
.t60 { width: 60px; margin-left: 3.500px; }
.t60b { width: 60px; margin-left: 7px; }
.groupb { display: flex; padding-left: 7px; }
.groupc { display: flex; padding-left: 2.500px; }
.sep { flex: none; width: 1px; height: 40px; margin-top: 5px; background: #a0a0a0; }
.sep2 { margin-left: 7.500px; }
.sep3 { margin-left: 2.500px; }
.g { fill: none; stroke: #c9c9c9; stroke-width: 1.300; }
.fg { fill: #d5d5d5; }
.o { fill: none; stroke: #b38a2d; stroke-width: 1.700; }
.o2 { stroke-width: 2.300; }
.of { fill: #b38a2d; }
.red { fill: #f40000; }

/* main */
.main { flex: none; height: 626px; display: flex; overflow: hidden; background: #2d2d2d; }
.side { flex: none; width: 247px; background: #333; overflow: hidden; }
.sidehead { height: 27px; line-height: 35px; text-align: center; color: #d2d2d2; border-bottom: 1px solid #7c7c7c; margin-left: 1px; }
.toc { list-style: none; margin: 0; padding: 1px 0 0; }
.toc li { position: relative; height: 13.950px; line-height: 14px; padding-left: 24px; white-space: nowrap; overflow: hidden; color: #d0d0d0; }
.toc .arr::before { content: ""; position: absolute; left: 9px; top: 2px; border-left: 5px solid #eee; border-top: 5px solid transparent; border-bottom: 5px solid transparent; }
.toc .cur > span { display: block; margin-left: -3px; padding-left: 3px; background: #2a2a2a; }
.sidebar-track { flex: none; width: 10px; background: #333; }
.thumb { width: 10px; height: 331px; background: #8c8c8c; border-radius: 0 0 5px 5px; }
.gutter { flex: none; width: 71px; background: linear-gradient(90deg, #3a3a3a, #2f2f2f 14px, #2d2d2d); position: relative; }
.collapse { position: absolute; left: 1px; top: 306px; fill: none; stroke: #d0d0d0; stroke-width: 1.500; }
.page { flex: none; display: block; filter: blur(.35px); }
.rightcol { flex: none; width: 60px; background: #2c2c2c; position: relative; }
.rthumb { position: absolute; left: 50px; top: 331px; width: 9px; height: 20px; border-radius: 4px; background: #a8a8a8; }

/* drawing */
.ln, .ln2 { fill: none; stroke: #444; stroke-width: .8; }
.ln2 { stroke: #333; stroke-width: 1.300; }
.ln2.thin { stroke-width: 1; stroke: #444; }
.th { stroke-width: 1.800; }
.dot { fill: #333; }
.tab text { font-size: 14px; fill: #333; }
.bleed text { font-size: 12px; fill: #888; }
.sm text { font-size: 10px; fill: #3a3a3a; }
.sm2 text, .sm3 text { font-size: 10.500px; fill: #3a3a3a; }
.sm3 text { font-size: 11.500px; }
.sm2 .s10 { font-size: 10px; }
.sm3 .s9 { font-size: 9.500px; }
.note text { font-size: 10.500px; fill: #3a3a3a; }
.it text, .it2, .ital { font-family: "Liberation Serif", serif; font-style: italic; }
.it text { font-size: 14px; fill: #333; }
.sm2 .it2 { font-size: 13px; }
.sub { font-size: 7px; }
.hd { font-size: 15px; fill: #222; font-weight: 500; }
.tt { font-size: 13px; fill: #222; }
.ul { stroke: #222; stroke-width: 1.400; fill: none; }
.cell text { font-size: 12px; fill: #3a3a3a; text-anchor: middle; }
.cell .c11 { font-size: 11px; }
.redbox { fill: none; stroke: #f00000; stroke-width: 3; }
.sm3 .sig { fill: #777; font-style: italic; }
.sigp { fill: none; stroke: #222; stroke-width: 1.500; }

/* status bar */
.status { flex: none; height: 27px; background: #3a3a3a; border-top: 1px solid #222; border-bottom: 1px solid #1c1c1c; display: flex; align-items: center; position: relative; }
.pagesize { width: 164px; margin-left: 2px; height: 24px; line-height: 24px; white-space: nowrap; color: #cfcfcf; border-right: 1px solid #eee; }
.pager { display: flex; align-items: center; margin-left: 474px; }
.pager svg, .vb svg { fill: none; stroke: #dcdcdc; stroke-width: 1.400; }
.pageinput { width: 39px; height: 17px; margin: 0 8px 0 6px; background: #fff; color: #222; border-radius: 5px; text-align: center; font: 11px/17px "Liberation Sans", sans-serif; }
.pageof { font: 10px "Liberation Mono", monospace; width: 34px; color: #cfcfcf; }
.viewbtns { position: absolute; right: 0; left: 1222px; top: 0; height: 25px; display: flex; align-items: center; }
.vsep { width: 1px; height: 22px; background: #ddd; flex: none; }
.vb { width: 26px; height: 22px; display: flex; align-items: center; justify-content: center; flex: none; }
.vb svg { stroke: #888; stroke-width: 1; }
.vb.on { background: #666; width: 24px; }
.vb.on svg { stroke: #ccc; }
.zm { margin-left: 10px; font: 14px "Liberation Sans", sans-serif; color: #bbb; width: 12px; }
.pct { margin-left: 12px; width: 38px; font: 10px "Liberation Mono", monospace; color: #c8c8c8; }
.zp { margin-left: 3px; font: 18px "Liberation Sans", sans-serif; color: #ccc; }

/* taskbar */
.taskbar { flex: none; height: 40px; background: #252525; display: flex; align-items: stretch; position: relative; overflow: hidden; }
.ghost { position: absolute; color: #454545; font-size: 13px; white-space: nowrap; }
.g1 { left: 393px; top: 17px; color: #1d3a5a; }
.g2 { left: 733px; top: -6px; font-family: "Liberation Mono", monospace; }
.g3 { left: 916px; top: 9px; color: #111; }
.g4 { left: 1005px; top: 9px; color: #555; }
.start { width: 48px; background: #000; display: flex; align-items: center; justify-content: center; flex: none; position: relative; }
.start svg { fill: #fff; margin-left: 1px; }
.search { width: 344px; background: #333; display: flex; align-items: center; padding-left: 9px; flex: none; position: relative; color: #8e8e8e; font-size: 14px; }
.search svg { fill: none; stroke: #e2e2e2; stroke-width: 2.500; flex: none; }
.search span { margin-left: 3px; }
.search .mic { margin-left: auto; margin-right: 14px; stroke: #8a8a8a; stroke-width: 1.200; }
.ti { flex: none; display: flex; align-items: center; justify-content: center; position: relative; }
.w48 { width: 48px; } .w52 { width: 52px; } .w46 { width: 46px; }
.run::after { content: ""; position: absolute; left: 4px; right: 4px; bottom: 0; height: 2px; background: #76b9ed; }
.active { background: #555; }
.active::after { left: 0; right: 0; }
.pdf { width: 24px; height: 26px; background: #bf6a1f; border: 1px solid #9a8a78; border-radius: 3px; display: flex; align-items: center; justify-content: center; font: 700 8px "Liberation Sans", sans-serif; color: #f3e6d4; }
.wt { fill: none; stroke: #eee; stroke-width: 1.500; }
.wf2 { fill: #ddd; }
.ff { fill: #e4e4e4; }
.gr { fill: none; stroke: #c8c8c8; stroke-width: 2; }
.gr2 { fill: none; stroke: #bbb; stroke-width: 1.300; }
.bell { fill: #e0a01a; }
.edge { fill: #0f74d3; }
.ie { fill: #2a9ae0; }
.ring { fill: none; stroke: #e8c33a; stroke-width: 2; }
.fy { fill: #f0d47a; }
.fb { fill: #2f9fe0; }
.gb { fill: #1f8ee6; }
.ge { fill: #6cbf3c; stroke: #e8f4dc; stroke-width: 1.500; }
.gl { fill: none; stroke: #fff; stroke-width: 1.800; }
.nt { fill: #f19a1f; }
.nw { fill: #fbeecf; }
.nl { fill: none; stroke: #a9722c; stroke-width: 1; }
.pn { fill: none; stroke: #c43; stroke-width: 2; }
.bb { fill: #0b84e6; }
.bw { fill: none; stroke: #fff; stroke-width: 2; }
.bk { fill: #1a6dc4; }
.bp { fill: #e9e3c8; }
.bm { fill: #a7d0ee; }
.tray { flex: 1; display: flex; align-items: stretch; position: relative; color: #eee; }
.lnk { width: 41px; padding-left: 13px; line-height: 40px; white-space: nowrap; font-size: 12px; }
.tr { flex: none; display: flex; align-items: center; justify-content: center; }
.w24 { width: 24px; } .w20 { width: 20px; } .w36 { width: 36px; } .w32 { width: 32px; }
.zh { font-size: 13px; }
.darktray { flex: 1; display: flex; background: linear-gradient(90deg, #0a1418 171px, #222 171px); }
.clock { flex: none; width: 78px; text-align: center; font-size: 13px; line-height: 19px; padding-top: 1px; color: #eee; font-family: "Liberation Sans", sans-serif; }
.notify { position: relative; flex: 1; }
.notify svg { position: absolute; left: 7px; top: 10px; }
.nf { fill: #f4f4f4; }
.nl2 { fill: none; stroke: #333; stroke-width: 1; }
.badge { position: absolute; left: 15px; top: 17px; width: 18px; height: 18px; border-radius: 50%; background: #333; border: 1.500px solid #bbb; font: 700 11px/15px "Liberation Sans", sans-serif; text-align: center; color: #eee; }
.sgbg { fill: #ef4a22; }
.sgs { fill: none; stroke: #fff; stroke-width: 2.500; }

/* floating IME bars and level badge */
.ime { position: absolute; height: 23px; display: flex; align-items: center; background: #fff; border: 1px solid #b9cbdc; border-left: 0; }
.ime1 { left: 663px; top: 25px; width: 204px; }
.ime2 { left: 729px; top: 102px; width: 204px; }
.ims { flex: none; width: 28px; height: 30px; margin-top: -3px; overflow: visible; }
.ims rect { fill: #ef4a22; }
.ims path { fill: none; stroke: #fff; stroke-width: 4; stroke-linecap: round; }
.zhong { flex: none; width: 22px; text-align: center; font-weight: 700; font-size: 14px; color: #1a6fc9; line-height: 22px; }
.punc { flex: none; width: 22px; text-align: center; font: 700 15px/18px "Liberation Sans", sans-serif; color: #1a6fc9; }
.ic { flex: none; }
.st { fill: none; stroke: #1a6fc9; stroke-width: 1.500; }
.fl { fill: #1a6fc9; }
.wd { fill: none; stroke: #fff; stroke-width: 1.200; stroke-dasharray: 1.500 1; }
.pa { fill: #b4c6d8; }
.pc { fill: #e9f0f6; stroke: #9fb4c8; }
.scorebadge { position: absolute; left: 1091px; top: -28px; width: 46px; height: 46px; border-radius: 50%; background: #3eb65a; border: 2px solid #d0d6d0; box-shadow: 0 2px 5px rgba(0,0,0,.6); display: flex; align-items: flex-end; justify-content: center; color: #fff; font: 700 12px/14px "Liberation Sans", sans-serif; padding-bottom: 2px; }
```
